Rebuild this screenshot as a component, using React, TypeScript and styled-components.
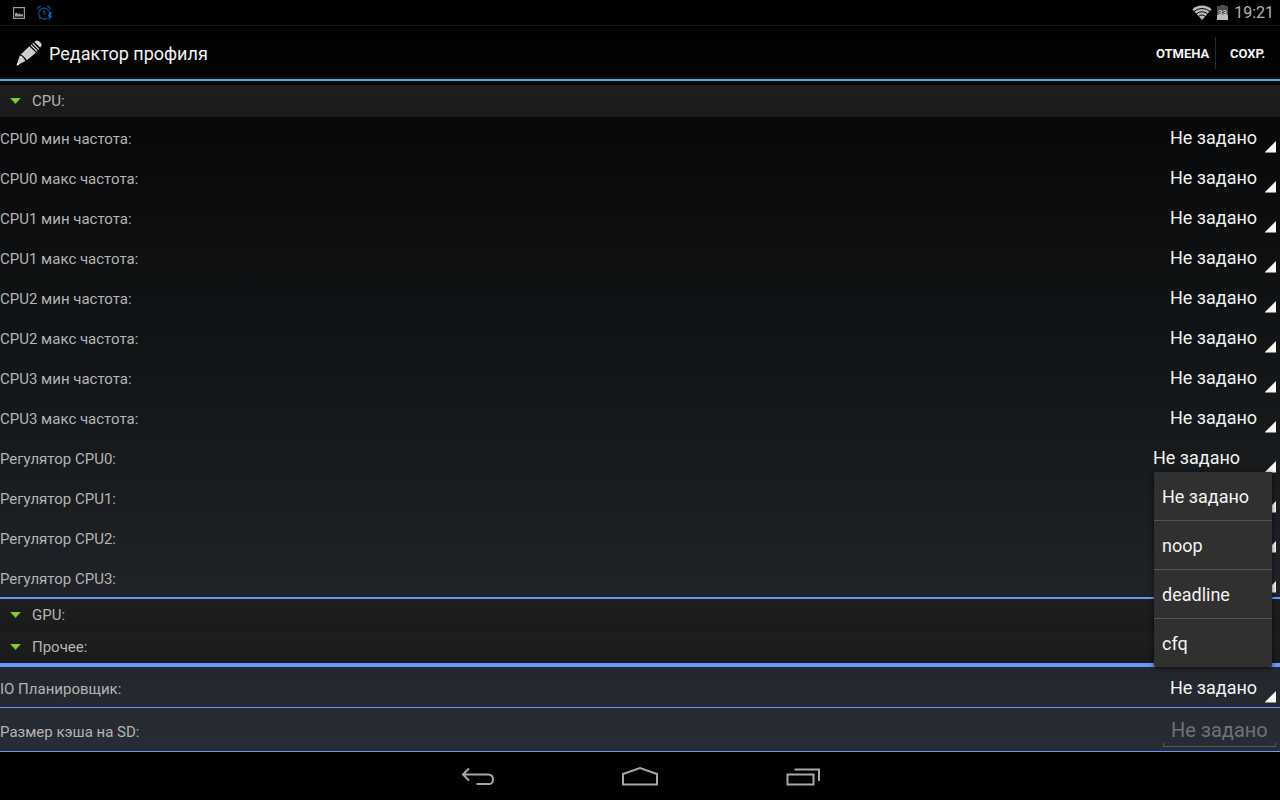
import React from 'react';
import styled, { createGlobalStyle } from 'styled-components';

const GlobalStyle = createGlobalStyle`
  *, *::before, *::after { box-sizing: border-box; }
  body {
    margin: 0;
    background: #000;
    color: #f3f3f3;
    font-family: Roboto, "Noto Sans", sans-serif;
  }
  button, input, select { font-family: inherit; color: inherit; }
`;

const Screen = styled.div`
  display: flex;
  flex-direction: column;
  min-height: 100vh;
`;

const StatusBar = styled.header`
  display: flex;
  align-items: center;
  justify-content: space-between;
  height: 25px;
  padding: 0 6px 0 13px;
  background: #000;
`;

const StatusGroup = styled.div<{ $gap: number }>`
  display: flex;
  align-items: center;
  gap: ${(p) => p.$gap}px;
`;

const Clock = styled.time`
  color: #b2b2b2;
  font-size: 16px;
  line-height: 25px;
`;

const AppWindow = styled.div`
  flex: 1;
  background: linear-gradient(#000 0%, #070809 14%, #181c1f 62%, #23272d 88%, #282c34 100%);
`;

const ActionBar = styled.div`
  display: flex;
  align-items: center;
  height: 56px;
  padding-left: 16px;
  border-top: 1px solid #161616;
  border-bottom: 2px solid #33b5e5;
`;

const Title = styled.h1`
  flex: 1;
  margin: 0 0 0 7px;
  padding-top: 2px;
  font-size: 18px;
  font-weight: 400;
  line-height: 24px;
`;

const ActionButton = styled.button<{ $width: number }>`
  width: ${(p) => p.$width}px;
  height: 32px;
  padding: 2px 0 0;
  border: 0;
  background: none;
  font-size: 13px;
  font-weight: 700;
  text-align: left;
  white-space: nowrap;
`;

const ActionDivider = styled.span`
  width: 1px;
  height: 32px;
  margin: 0 14px 0 6px;
  background: #2a2a2a;
`;

const Content = styled.main`
  padding-top: 4px;
`;

const SectionToggle = styled.button`
  display: flex;
  align-items: center;
  gap: 11px;
  width: 100%;
  height: 32px;
  padding: 0 10px;
  border: 0;
  background: linear-gradient(#1e1e1e, #1a1a1a);
  color: #b4b4b4;
  font-size: 15px;
  text-align: left;
`;

const Divider = styled.hr<{ $size: number }>`
  height: ${(p) => p.$size}px;
  margin: 0;
  border: 0;
  background: #6699ff;
`;

const Row = styled.div<{ $height: number }>`
  position: relative;
  display: flex;
  align-items: center;
  justify-content: space-between;
  height: ${(p) => p.$height}px;
  padding-right: 4px;
`;

const Label = styled.label`
  padding-top: 4px;
  color: #b4b4b4;
  font-size: 15px;
  line-height: 20px;
`;

const SpinnerBox = styled.div<{ $wide: boolean }>`
  position: relative;
  width: ${(p) => (p.$wide ? 131 : 114)}px;
  height: 40px;
`;

const Spinner = styled.select`
  width: 100%;
  height: 40px;
  padding: 0 16px 0 8px;
  border: 0;
  outline: 0;
  appearance: none;
  background: none;
  font-size: 18px;
`;

const Corner = styled.svg`
  position: absolute;
  right: 0;
  bottom: 4px;
  pointer-events: none;
`;

const Popup = styled.ul`
  position: absolute;
  z-index: 1;
  top: 35px;
  right: 8px;
  width: 118px;
  margin: 0;
  padding: 0;
  border-radius: 0 0 2px 2px;
  background: #303030;
  box-shadow: 0 1px 5px rgba(0, 0, 0, 0.7);
  list-style: none;
`;

const PopupItem = styled.li`
  & + & { border-top: 1px solid #555; }
`;

const PopupButton = styled.button`
  width: 100%;
  height: 48px;
  padding: 0 8px;
  border: 0;
  background: none;
  font-size: 18px;
  text-align: left;
`;

const Field = styled.input`
  width: 113px;
  height: 34px;
  padding: 0 8px;
  border: 0;
  outline: 0;
  background:
    linear-gradient(#55585c, #55585c) 0 100% / 100% 1px no-repeat,
    linear-gradient(#55585c, #55585c) 0 100% / 1px 4px no-repeat,
    linear-gradient(#55585c, #55585c) 100% 100% / 1px 4px no-repeat;
  font-size: 20px;
  &::placeholder { color: #707276; opacity: 1; }
`;

const NavBar = styled.nav`
  display: flex;
  justify-content: center;
  height: 48px;
  background: #000;
`;

const NavButton = styled.button`
  display: flex;
  align-items: center;
  justify-content: center;
  width: 162px;
  padding: 2px 0 0;
  border: 0;
  background: none;
`;

const PictureIcon = () => (
  <svg width="12" height="12" viewBox="0 0 12 12" aria-hidden="true">
    <rect x="0.6" y="0.6" width="10.8" height="10.8" fill="none" stroke="#9a9a9a" strokeWidth="1.2" />
    <path d="M2 9.5V6.500L3.500 5.500 5 7 6.500 6.500 8 7.500l2-.5v2.500z" fill="#9a9a9a" />
  </svg>
);

const AlarmIcon = () => (
  <svg width="16" height="16" viewBox="0 0 16 16" fill="none" stroke="#0d4f8c" strokeWidth="1.2" aria-hidden="true">
    <path d="M10.5 13A5.5 5.5 0 1 1 12.6 7.5" />
    <path d="M7 4.5V8.5L9 9.500M.8 4.500Q.8 1.500 4 1.300M10 1.300Q13.200 1.500 13.200 4.500M3.500 12.500 2 14" />
    <path d="M12.500 7 10.500 11.500H12L11.500 15.500 15.500 10.500H13.500L15 7Z" fill="#0d5fa8" stroke="none" />
  </svg>
);

const WifiIcon = () => (
  <svg width="20" height="16" viewBox="0 0 20 16" aria-hidden="true">
    <path d="M10 15 .4 4.200Q4.500 .5 10 .5T19.600 4.200Z" fill="#bdbdbd" />
    <path d="M2 6.500Q5.500 3.500 10 3.500T18 6.500M4.200 9.100Q6.800 6.700 10 6.700T15.800 9.100M6.500 11.500Q8 10 10 10T13.500 11.500" fill="none" stroke="#000" strokeWidth="1" />
  </svg>
);

const BatteryIcon = () => (
  <svg width="11" height="16" viewBox="0 0 11 16" aria-hidden="true">
    <path d="M3 0H8V1H11V15H0V1H3Z" fill="#4c4c4c" />
    <rect y="10" width="11" height="5" fill="#bdbdbd" />
    <text x="5.5" y="10" textAnchor="middle" fontSize="8" fontWeight="700" fill="#c4c4c4">33</text>
  </svg>
);

const PencilIcon = () => (
  <svg width="26" height="26" viewBox="0 0 26 26" aria-hidden="true">
    <g fill="#d0d0d0">
      <path d="M.6 25.500 3.700 15.800Q5.200 15.300 6.700 17.100T9.400 20.900Z" />
      <path d="M4.600 14.700 13.400 6.200 19.900 12.700 10.800 20.300Q9.800 18.600 8 16.700T4.600 14.700Z" />
      <path d="M18.400 1.900 19.800.8Q21.500-.2 24 2T25.200 6L24.200 7.700Z" />
    </g>
    <path d="M14.900 5 21.200 11.300M16.700 3.300 23 9.600" stroke="#d0d0d0" strokeWidth="1.300" />
    <path d="M.6 25.500 1.500 22.600 3.400 24.500Z" fill="#fff" />
  </svg>
);

const ArrowIcon = () => (
  <svg width="11" height="6" viewBox="0 0 11 6" aria-hidden="true">
    <path d="M0 0H11L5.500 6Z" fill="#6fb81e" />
    <path d="M1.500 .5H9.500L5.500 4.500Z" fill="#8ad52c" />
  </svg>
);

const CornerMark = () => (
  <Corner width="12" height="12" viewBox="0 0 12 12" aria-hidden="true">
    <path d="M12 0V11H1Z" fill="#fbf5f1" />
    <path d="M1 11.500H12" stroke="#8b8987" />
  </Corner>
);

const BackIcon = () => (
  <svg width="34" height="22" viewBox="0 0 34 22" fill="none" stroke="#a6a6a6" strokeWidth="2" aria-hidden="true">
    <path d="M8 2.500 2 8.500 8 14.500M2 8.500H27Q32 8.500 32 13.500T27 18H15.500" />
  </svg>
);

const HomeIcon = () => (
  <svg width="38" height="22" viewBox="0 0 38 22" fill="none" stroke="#a6a6a6" strokeWidth="2" aria-hidden="true">
    <path d="M2 18.500V8L19 2 36 8V18.500Z" />
  </svg>
);

const RecentIcon = () => (
  <svg width="36" height="22" viewBox="0 0 36 22" fill="none" stroke="#a6a6a6" strokeWidth="2" aria-hidden="true">
    <path d="M3.500 8.500H29.500V18.500H3.500ZM10.500 3.500H35V15" />
  </svg>
);

const UNSET = 'Не задано';
const SCHEDULERS = [UNSET, 'noop', 'deadline', 'cfq'];

const CPU_ROWS = [
  ...[0, 1, 2, 3].flatMap((n) => [`CPU${n} мин частота:`, `CPU${n} макс частота:`]),
  ...[0, 1, 2, 3].map((n) => `Регулятор CPU${n}:`),
];
const OPEN_ROW = 'Регулятор CPU0:';

function SpinnerRow({ id, label, open = false }: { id: string; label: string; open?: boolean }) {
  return (
    <Row $height={40}>
      <Label htmlFor={id}>{label}</Label>
      <SpinnerBox $wide={open}>
        <Spinner id={id} defaultValue={UNSET}>
          <option>{UNSET}</option>
        </Spinner>
        <CornerMark />
      </SpinnerBox>
      {open && (
        <Popup>
          {SCHEDULERS.map((name) => (
            <PopupItem key={name}>
              <PopupButton type="button">{name}</PopupButton>
            </PopupItem>
          ))}
        </Popup>
      )}
    </Row>
  );
}

function Section({ title }: { title: string }) {
  return (
    <SectionToggle type="button">
      <ArrowIcon />
      {title}
    </SectionToggle>
  );
}

export default function App() {
  return (
    <Screen>
      <GlobalStyle />
      <StatusBar>
        <StatusGroup $gap={12}>
          <PictureIcon />
          <AlarmIcon />
        </StatusGroup>
        <StatusGroup $gap={6}>
          <StatusGroup $gap={5}>
            <WifiIcon />
            <BatteryIcon />
          </StatusGroup>
          <Clock>19:21</Clock>
        </StatusGroup>
      </StatusBar>
      <AppWindow>
        <ActionBar>
          <PencilIcon />
          <Title>Редактор профиля</Title>
          <ActionButton type="button" $width={53}>ОТМЕНА</ActionButton>
          <ActionDivider />
          <ActionButton type="button" $width={50}>СОХР.</ActionButton>
        </ActionBar>
        <Content>
          <Section title="CPU:" />
          {CPU_ROWS.map((label, i) => (
            <SpinnerRow key={label} id={`cpu-${i}`} label={label} open={label === OPEN_ROW} />
          ))}
          <Divider $size={2} />
          <Section title="GPU:" />
          <Section title="Прочее:" />
          <Divider $size={4} />
          <SpinnerRow id="io" label="IO Планировщик:" />
          <Divider $size={1} />
          <Row $height={43}>
            <Label htmlFor="sd-cache">Размер кэша на SD:</Label>
            <Field id="sd-cache" type="text" placeholder={UNSET} />
          </Row>
          <Divider $size={1} />
        </Content>
      </AppWindow>
      <NavBar>
        <NavButton type="button" aria-label="Назад"><BackIcon /></NavButton>
        <NavButton type="button" aria-label="Домой"><HomeIcon /></NavButton>
        <NavButton type="button" aria-label="Недавние"><RecentIcon /></NavButton>
      </NavBar>
    </Screen>
  );
}
